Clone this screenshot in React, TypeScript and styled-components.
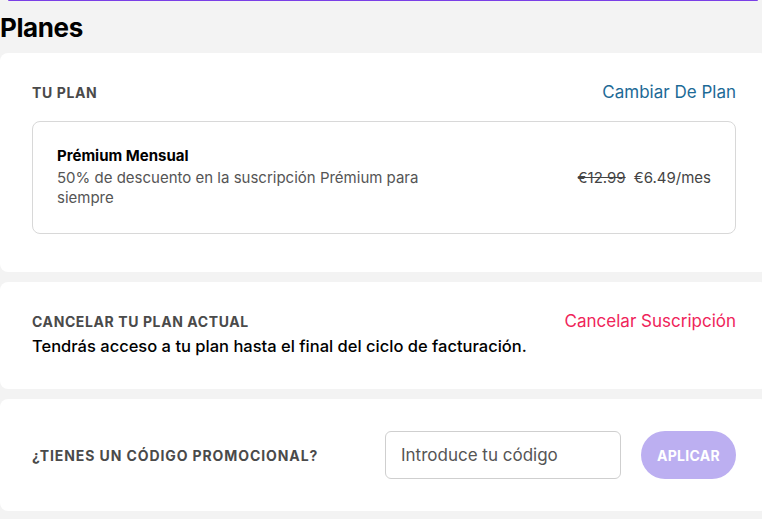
import React from "react";
import styled, { createGlobalStyle } from "styled-components";

const GlobalStyle = createGlobalStyle`
  html, body {
    margin: 0;
    padding: 0;
    background: #f3f3f3;
    overflow: hidden;
  }
  body {
    font-family: Inter, "Noto Sans", sans-serif;
    color: #111;
  }
`;

const Page = styled.div`
  width: 768px;
  display: flex;
  flex-direction: column;
`;

const TopLine = styled.div`
  height: 1px;
  margin-left: 8px;
  width: 750px;
  background: #7a3fe6;
  border-radius: 0 0 2px 2px;
`;

const Title = styled.h1`
  margin: 11px 0 10px;
  font-size: 26px;
  line-height: 31px;
  font-weight: 700;
  color: #000;
  letter-spacing: -0.4px;
`;

const Stack = styled.div`
  display: flex;
  flex-direction: column;
  gap: 10px;
`;

const Card = styled.section<{ $pad: string }>`
  background: #fff;
  border-radius: 8px;
  padding: ${(p) => p.$pad};
  display: flex;
  flex-direction: column;
`;

const HeaderRow = styled.div`
  display: flex;
  justify-content: space-between;
  align-items: center;
  height: 22px;
`;

const SectionLabel = styled.span`
  font-size: 14px;
  font-weight: 700;
  letter-spacing: 0.6px;
  color: #4a4a4a;
  text-transform: uppercase;
`;

const LinkText = styled.a<{ $color: string }>`
  font-size: 17px;
  color: ${(p) => p.$color};
  text-decoration: none;
  cursor: pointer;
`;

const PlanBox = styled.div`
  margin-top: 18px;
  border: 1px solid #d8d8d8;
  border-radius: 8px;
  padding: 24px 24px 25px;
  display: flex;
  justify-content: space-between;
  align-items: center;
`;

const PlanInfo = styled.div`
  max-width: 370px;
  display: flex;
  flex-direction: column;
`;

const PlanName = styled.div`
  font-size: 15px;
  line-height: 20px;
  font-weight: 700;
  color: #000;
`;

const PlanDesc = styled.div`
  margin-top: 2px;
  font-size: 15px;
  line-height: 20px;
  color: #555;
`;

const Price = styled.div`
  font-size: 15px;
  color: #444;
  display: flex;
  gap: 8px;
`;

const OldPrice = styled.s`
  color: #444;
`;

const Notice = styled.p`
  margin: 3px 0 0;
  font-size: 16.5px;
  line-height: 22px;
  font-weight: 500;
  color: #000;
`;

const PromoRow = styled.div`
  display: flex;
  align-items: center;
`;

const PromoLabel = styled(SectionLabel)`
  flex: 1;
  letter-spacing: 0.9px;
`;

const CodeInput = styled.input`
  width: 236px;
  height: 48px;
  box-sizing: border-box;
  border: 1px solid #cfcfcf;
  border-radius: 6px;
  padding: 0 15px;
  font-family: inherit;
  font-size: 17px;
  color: #333;
  outline: none;
  &::placeholder {
    color: #555;
  }
`;

const ApplyButton = styled.button`
  margin-left: 20px;
  width: 95px;
  height: 48px;
  border: none;
  border-radius: 24px;
  background: #bcaff1;
  color: #fff;
  font-family: inherit;
  font-size: 14px;
  font-weight: 700;
  letter-spacing: 0.3px;
`;

export default function App() {
  return (
    <>
      <GlobalStyle />
      <Page>
        <TopLine />
        <Title>Planes</Title>
        <Stack>
          <Card $pad="28px 32px 38px">
            <HeaderRow>
              <SectionLabel>Tu plan</SectionLabel>
              <LinkText $color="#1d6a96">Cambiar De Plan</LinkText>
            </HeaderRow>
            <PlanBox>
              <PlanInfo>
                <PlanName>Prémium Mensual</PlanName>
                <PlanDesc>
                  50% de descuento en la suscripción Prémium para siempre
                </PlanDesc>
              </PlanInfo>
              <Price>
                <OldPrice>€12.99</OldPrice>
                <span>€6.49/mes</span>
              </Price>
            </PlanBox>
          </Card>
          <Card $pad="28px 32px 32px">
            <HeaderRow>
              <SectionLabel>Cancelar tu plan actual</SectionLabel>
              <LinkText $color="#ef245a">Cancelar Suscripción</LinkText>
            </HeaderRow>
            <Notice>
              Tendrás acceso a tu plan hasta el final del ciclo de facturación.
            </Notice>
          </Card>
          <Card $pad="32px 32px">
            <PromoRow>
              <PromoLabel>¿Tienes un código promocional?</PromoLabel>
              <CodeInput placeholder="Introduce tu código" />
              <ApplyButton>APLICAR</ApplyButton>
            </PromoRow>
          </Card>
        </Stack>
      </Page>
    </>
  );
}
